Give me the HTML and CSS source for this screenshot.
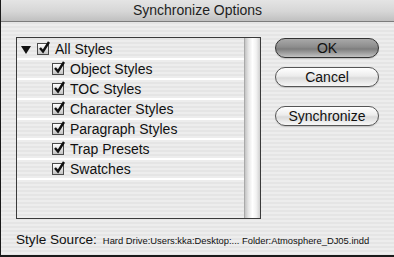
FILE: index.html
```html
<!DOCTYPE html>
<html lang="en">
<head>
    <meta charset="UTF-8">
    <title>Synchronize Options</title>
    <link rel="stylesheet" href="styles.css">
</head>
<body>
    <div class="dialog">
        <div class="titlebar">Synchronize Options</div>

        <div class="content">
            <div class="main">
                <div class="listbox">
                    <div class="rows">
                        <div class="row parent">
                            <svg class="twisty" width="10" height="8" viewBox="0 0 10 8"><polygon points="0,0 10,0 5,8" fill="#111"/></svg>
                            <span class="check"><svg width="14" height="14" viewBox="0 0 14 14"><path d="M3 7 L6 10.5 L12 1" fill="none" stroke="#111" stroke-width="2.4"/></svg></span>
                            All Styles
                        </div>
                        <div class="row child">
                            <span class="check"><svg width="14" height="14" viewBox="0 0 14 14"><path d="M3 7 L6 10.5 L12 1" fill="none" stroke="#111" stroke-width="2.4"/></svg></span>
                            Object Styles
                        </div>
                        <div class="row child">
                            <span class="check"><svg width="14" height="14" viewBox="0 0 14 14"><path d="M3 7 L6 10.5 L12 1" fill="none" stroke="#111" stroke-width="2.4"/></svg></span>
                            TOC Styles
                        </div>
                        <div class="row child">
                            <span class="check"><svg width="14" height="14" viewBox="0 0 14 14"><path d="M3 7 L6 10.5 L12 1" fill="none" stroke="#111" stroke-width="2.4"/></svg></span>
                            Character Styles
                        </div>
                        <div class="row child">
                            <span class="check"><svg width="14" height="14" viewBox="0 0 14 14"><path d="M3 7 L6 10.5 L12 1" fill="none" stroke="#111" stroke-width="2.4"/></svg></span>
                            Paragraph Styles
                        </div>
                        <div class="row child">
                            <span class="check"><svg width="14" height="14" viewBox="0 0 14 14"><path d="M3 7 L6 10.5 L12 1" fill="none" stroke="#111" stroke-width="2.4"/></svg></span>
                            Trap Presets
                        </div>
                        <div class="row child">
                            <span class="check"><svg width="14" height="14" viewBox="0 0 14 14"><path d="M3 7 L6 10.5 L12 1" fill="none" stroke="#111" stroke-width="2.4"/></svg></span>
                            Swatches
                        </div>
                    </div>
                    <div class="scrollbar"></div>
                </div>

                <div class="buttons">
                    <button class="btn default">OK</button>
                    <button class="btn cancel">Cancel</button>
                    <button class="btn sync">Synchronize</button>
                </div>
            </div>

            <div class="source">
                <span class="label">Style Source:</span>
                <span class="path">Hard Drive:Users:kka:Desktop:... Folder:Atmosphere_DJ05.indd</span>
            </div>
        </div>
    </div>
</body>
</html>
```

FILE: styles.css
```css
:root {
    --stripe-a: #ededed;
    --stripe-b: #e5e5e5;
    --text-color: #111;
    --frame: #1a1a1a;
}

body {
    margin: 0;
    font-family: "Liberation Sans", Arial, sans-serif;
    color: var(--text-color);
}

/* Window */
.dialog {
    width: 394px;
    height: 257px;
    box-sizing: border-box;
    border-left: 1px solid var(--frame);
    border-bottom: 2px solid var(--frame);
    display: flex;
    flex-direction: column;
    background: repeating-linear-gradient(to bottom, var(--stripe-a) 0 2px, var(--stripe-b) 2px 4px);
}

.titlebar {
    height: 21px;
    line-height: 21px;
    text-align: center;
    font-size: 14px;
    color: #1e1e1e;
    background: linear-gradient(to bottom, #e4e4e4 0%, #d6d6d6 55%, #c0c0c0 100%);
    border-bottom: 1px solid #7c7c7c;
}

.content {
    flex: 1;
    padding: 15px 0 0 15px;
}

.main {
    display: flex;
    gap: 14px;
}

/* List */
.listbox {
    width: 245px;
    height: 182px;
    box-sizing: border-box;
    border: 1px solid #3a3a3a;
    display: flex;
}

.rows {
    flex: 1;
    padding-top: 2px;
}

.row {
    height: 18px;
    border-bottom: 2px solid #ffffff;
    display: flex;
    align-items: center;
    font-size: 14px;
    white-space: nowrap;
}

.row.parent {
    padding-left: 4px;
}

.row.child {
    padding-left: 35px;
}

.twisty {
    margin-right: 6px;
    margin-top: 2px;
}

.check {
    position: relative;
    width: 10px;
    height: 10px;
    border: 1px solid #4a4a4a;
    background: linear-gradient(to bottom, #ffffff, #c4c4c4);
    margin-right: 6px;
    flex-shrink: 0;
}

.check svg {
    position: absolute;
    left: -1px;
    top: -3px;
}

.scrollbar {
    width: 15px;
    border-left: 1px solid #a9a9a9;
    background: linear-gradient(to right, #c4c4c4 0%, #e9e9e9 25%, #ffffff 50%, #f2f2f2 75%, #d0d0d0 100%);
}

/* Buttons */
.buttons {
    display: flex;
    flex-direction: column;
    width: 104px;
    padding-top: 1px;
}

.btn {
    height: 20px;
    padding: 0;
    border: 1px solid #555;
    border-radius: 10px;
    font-family: "Liberation Sans", Arial, sans-serif;
    font-size: 14px;
    color: #111;
    background: linear-gradient(to bottom, #ffffff 0%, #ececec 45%, #dadada 55%, #f7f7f7 100%);
    box-shadow: 0 1px 1px rgba(0, 0, 0, 0.15);
}

.btn.default {
    border-color: #333;
    background: linear-gradient(to bottom, #a9a9a9 0%, #8c8c8c 45%, #7d7d7d 55%, #c2c2c2 100%);
}

.btn.cancel {
    margin-top: 9px;
}

.btn.sync {
    margin-top: 19px;
}

/* Footer */
.source {
    padding-top: 13px;
    display: flex;
    align-items: baseline;
    line-height: 16px;
}

.source .label {
    font-size: 13.6px;
    margin-right: 6px;
}

.source .path {
    font-size: 9.4px;
}
```
